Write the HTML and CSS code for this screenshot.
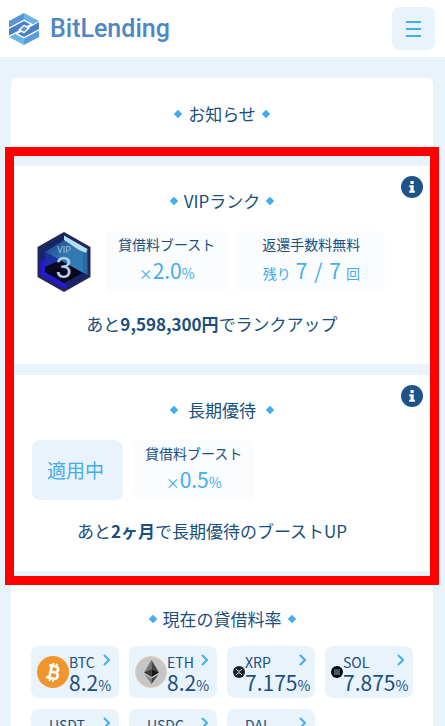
FILE: index.html
```html
<!DOCTYPE html>
<html lang="ja">
<head>
    <meta charset="UTF-8">
    <meta name="viewport" content="width=device-width, initial-scale=1.0">
    <title>BitLending</title>
    <link rel="stylesheet" href="styles.css">
</head>
<body>
    <header class="header">
        <a href="#" class="logo">
            <svg class="logo-mark" viewBox="0 0 30 32" aria-hidden="true">
                <path fill="#5795d6" d="M0 8 15 0V6.500L0 14.500z"/>
                <path fill="#68b4e4" d="M15 0 30 8 24 11.200 15 6.500z"/>
                <path fill="#4a80c6" d="M0 16 15 8 21 11.200 6 19.500 0 22.500z"/>
                <path fill="#4a80c6" d="M30 9V16L15 24 9 20.800 24 12.500z"/>
                <path fill="#5b9bdb" d="M30 17.500V24L15 32V25.500z"/>
                <path fill="#68b4e4" d="M15 32 0 24 6 20.800 15 25.500z"/>
                <path fill="#fff" d="M15 11.500 21 15 15 20.500 9 17z"/>
                <path fill="#5b9bdb" d="M15 13.200 18.500 15.300 15 18.800 11.500 16.700z"/>
            </svg>
            <span class="logo-text">BitLending</span>
        </a>
        <button class="menu-button" type="button" aria-label="メニュー">
            <span></span>
            <span></span>
            <span></span>
        </button>
    </header>

    <main class="main">
        <section class="card news">
            <h2 class="card-title">お知らせ</h2>
        </section>

        <div class="highlight">
            <section class="card status">
                <button class="info-button" type="button" aria-label="VIPランクについて">
                    <svg viewBox="0 0 22 22"><path fill="#fff" d="M9.500 5h3.200v3H9.500zM8.300 9.300h4.400v5.400h1.200v2H8.200v-2h1.300v-3.400H8.300z"/></svg>
                </button>
                <h2 class="card-title">VIPランク</h2>
                <div class="status-body">
                    <div class="status-row">
                        <svg class="rank-badge" viewBox="0 0 64 62" role="img" aria-label="VIP 3">
                            <defs>
                                <linearGradient id="shine" x1="0" y1="0" x2="1" y2="1">
                                    <stop offset="0" stop-color="#1c3f7c"/>
                                    <stop offset="0.5" stop-color="#3476b0"/>
                                    <stop offset="1" stop-color="#2f7fb8"/>
                                </linearGradient>
                                <linearGradient id="digit" x1="0" y1="0" x2="0" y2="1">
                                    <stop offset="0" stop-color="#a9d8f6"/>
                                    <stop offset="1" stop-color="#c3c9ec"/>
                                </linearGradient>
                            </defs>
                            <path fill="#252557" d="M32 1 58.500 16V46L32 61 5.500 46V16z"/>
                            <path fill="#14266a" d="M32 4.500 55.500 18V44L32 57.500 8.500 44V18z"/>
                            <path fill="#2419d2" d="M8.500 30 13 27V41L32 52 36 55 32 57.500 8.500 44z"/>
                            <path fill="#2b6ba5" d="M50 22 55.500 18V44L50 41z"/>
                            <path fill="url(#shine)" d="M32 9 51 20V42L13 21z"/>
                            <path fill="#1c2fa0" d="M13 21 32 31 13 41z"/>
                            <path fill="#060820" d="M13 36 28 29 51 42 32 52 13 41z"/>
                            <path fill="#b3dff3" d="M32 4.500 55.500 18 54 22 47 19 32 9z"/>
                            <text class="rank-label" x="32" y="22">VIP</text>
                            <text class="rank-number" x="32" y="47" fill="url(#digit)">3</text>
                        </svg>
                        <div class="stat">
                            <p class="stat-label">貸借料ブースト</p>
                            <p class="stat-value">×<strong>2.0</strong>%</p>
                        </div>
                        <div class="stat stat-wide">
                            <p class="stat-label">返還手数料無料</p>
                            <p class="stat-value">残り <strong class="stat-count">7 <span>/</span> 7</strong> 回</p>
                        </div>
                    </div>
                    <p class="status-note">あと<b>9,598,300円</b>でランクアップ</p>
                </div>
            </section>

            <section class="card status">
                <button class="info-button" type="button" aria-label="長期優待について">
                    <svg viewBox="0 0 22 22"><path fill="#fff" d="M9.500 5h3.200v3H9.500zM8.300 9.300h4.400v5.400h1.200v2H8.200v-2h1.300v-3.400H8.300z"/></svg>
                </button>
                <h2 class="card-title title-spaced">長期優待</h2>
                <div class="status-body">
                    <div class="status-row">
                        <div class="applied">適用中</div>
                        <div class="stat">
                            <p class="stat-label">貸借料ブースト</p>
                            <p class="stat-value">×<strong>0.5</strong>%</p>
                        </div>
                    </div>
                    <p class="status-note">あと<b>2ヶ月</b>で長期優待のブーストUP</p>
                </div>
            </section>
        </div>

        <section class="card rates">
            <h2 class="card-title">現在の貸借料率</h2>
            <div class="coin-grid">
                <a href="#" class="coin">
                    <svg class="coin-icon" viewBox="0 0 32 32" aria-hidden="true">
                        <circle cx="16" cy="16" r="16" fill="#f0962c"/>
                        <g transform="rotate(13 16 16)" fill="none" stroke="#fff" stroke-width="2.600">
                            <path d="M10.500 10H17.500a3 3 0 0 1 0 6H13.500M17.500 16h.8a3.200 3.200 0 0 1 0 6.400H10.500M13.500 10V22.400"/>
                            <path stroke-width="2" d="M14.500 7v3M18 7v3M14.500 22v3.500M18 22v3.500"/>
                        </g>
                    </svg>
                    <div class="coin-body">
                        <div class="coin-name">BTC<svg class="chevron" viewBox="0 0 7 12"><path d="M1 1l5 5-5 5"/></svg></div>
                        <div class="coin-rate"><strong>8.2</strong>%</div>
                    </div>
                </a>
                <a href="#" class="coin">
                    <svg class="coin-icon" viewBox="0 0 32 32" aria-hidden="true">
                        <circle cx="16" cy="16" r="15.500" fill="#c6c5c6" stroke="#e3cdb8"/>
                        <path fill="#777" d="M16.500 4 9 16.500 16.500 13z"/>
                        <path fill="#444" d="M16.500 4 24 16.500 16.500 13z"/>
                        <path fill="#3a3a3a" d="M9 16.500 16.500 13V21z"/>
                        <path fill="#151515" d="M24 16.500 16.500 13V21z"/>
                        <path fill="#858585" d="M9.500 18.500 16.500 22.500V28z"/>
                        <path fill="#444" d="M23.500 18.500 16.500 22.500V28z"/>
                    </svg>
                    <div class="coin-body">
                        <div class="coin-name">ETH<svg class="chevron" viewBox="0 0 7 12"><path d="M1 1l5 5-5 5"/></svg></div>
                        <div class="coin-rate"><strong>8.2</strong>%</div>
                    </div>
                </a>
                <a href="#" class="coin">
                    <svg class="coin-icon coin-icon-small" viewBox="0 0 12 12" aria-hidden="true">
                        <circle cx="6" cy="6" r="6" fill="#1d2128"/>
                        <path fill="none" stroke="#e4e7ea" d="M3 3l1.800 1.800q1.200 1 2.400 0L9 3M3 9l1.800-1.800q1.200-1 2.400 0L9 9"/>
                    </svg>
                    <div class="coin-body">
                        <div class="coin-name">XRP<svg class="chevron" viewBox="0 0 7 12"><path d="M1 1l5 5-5 5"/></svg></div>
                        <div class="coin-rate"><strong>7.175</strong>%</div>
                    </div>
                </a>
                <a href="#" class="coin">
                    <svg class="coin-icon coin-icon-small" viewBox="0 0 12 12" aria-hidden="true">
                        <circle cx="6" cy="6" r="6" fill="#05070c"/>
                        <path stroke="#7fa9c4" d="M3 4h6M3 6h6M3 8h6"/>
                    </svg>
                    <div class="coin-body">
                        <div class="coin-name">SOL<svg class="chevron" viewBox="0 0 7 12"><path d="M1 1l5 5-5 5"/></svg></div>
                        <div class="coin-rate"><strong>7.875</strong>%</div>
                    </div>
                </a>
                <a href="#" class="coin">
                    <svg class="coin-icon coin-icon-small" viewBox="0 0 12 12" aria-hidden="true"><circle cx="6" cy="6" r="6" fill="#26a17b"/></svg>
                    <div class="coin-body">
                        <div class="coin-name">USDT<svg class="chevron" viewBox="0 0 7 12"><path d="M1 1l5 5-5 5"/></svg></div>
                    </div>
                </a>
                <a href="#" class="coin">
                    <svg class="coin-icon coin-icon-small" viewBox="0 0 12 12" aria-hidden="true"><circle cx="6" cy="6" r="6" fill="#2775ca"/></svg>
                    <div class="coin-body">
                        <div class="coin-name">USDC<svg class="chevron" viewBox="0 0 7 12"><path d="M1 1l5 5-5 5"/></svg></div>
                    </div>
                </a>
                <a href="#" class="coin">
                    <svg class="coin-icon coin-icon-small" viewBox="0 0 12 12" aria-hidden="true"><circle cx="6" cy="6" r="6" fill="#f5ac37"/></svg>
                    <div class="coin-body">
                        <div class="coin-name">DAI<svg class="chevron" viewBox="0 0 7 12"><path d="M1 1l5 5-5 5"/></svg></div>
                    </div>
                </a>
            </div>
        </section>
    </main>
</body>
</html>
```

FILE: styles.css
```css
:root {
    --text-color: #1b4f7e;
    --accent-color: #45acee;
    --background-color: #e9f3fc;
    --stat-color: #fbfcfd;
    --highlight-color: #ff0000;
}

* {
    box-sizing: border-box;
}

body {
    margin: 0;
    background-color: var(--background-color);
    color: var(--text-color);
    font-family: "Noto Sans CJK JP", sans-serif;
    font-size: 17px;
}

p,
h2 {
    margin: 0;
}

a {
    color: inherit;
    text-decoration: none;
}

button {
    padding: 0;
    border: none;
    cursor: pointer;
}

svg {
    display: block;
}

.header {
    display: flex;
    justify-content: space-between;
    align-items: center;
    height: 57px;
    padding: 0 10px 0 9px;
    background-color: #ffffff;
}

.logo {
    display: flex;
    align-items: center;
    gap: 11px;
}

.logo-mark {
    width: 30px;
    height: 32px;
}

.logo-text {
    color: #4f86c6;
    font-family: Roboto, sans-serif;
    font-size: 25px;
    font-weight: 500;
    line-height: 32px;
}

.menu-button {
    display: flex;
    flex-direction: column;
    justify-content: center;
    align-items: center;
    gap: 5px;
    width: 43px;
    height: 43px;
    border-radius: 8px;
    background-color: var(--background-color);
}

.menu-button span {
    width: 15px;
    height: 2px;
    background-color: var(--accent-color);
}

.main {
    padding: 21px 12px 0 11px;
}

.card {
    position: relative;
    background-color: #ffffff;
}

.card-title {
    display: flex;
    justify-content: center;
    align-items: center;
    gap: 7px;
    font-size: 17px;
    font-weight: 400;
    line-height: 25px;
}

.card-title::before,
.card-title::after {
    content: "";
    width: 6px;
    height: 6px;
    background-color: var(--accent-color);
    transform: rotate(45deg);
}

.title-spaced {
    gap: 11px;
}

.news {
    padding: 23px 0 21px;
    border-radius: 6px 6px 0 0;
}

/* 赤枠 */
.highlight {
    display: flex;
    flex-direction: column;
    gap: 11px;
    margin: 0 -6px;
    padding: 10px 0 5px;
    border: 9px solid var(--highlight-color);
}

.status {
    padding: 22px 0 27px;
}

.status-body {
    padding: 18px 38px 0 18px;
}

.status-row {
    display: flex;
    gap: 10px;
    min-height: 60px;
}

.status-note {
    margin-top: 18px;
    line-height: 26px;
    text-align: center;
}

.info-button {
    position: absolute;
    top: 10px;
    right: 7px;
    width: 22px;
    height: 22px;
    border-radius: 50%;
    background-color: #1d5487;
}

.rank-badge {
    width: 64px;
    height: 62px;
}

.rank-label {
    fill: #8fc3e6;
    font-family: Roboto, sans-serif;
    font-size: 9px;
    text-anchor: middle;
}

.rank-number {
    font-family: Roboto, sans-serif;
    font-size: 30px;
    text-anchor: middle;
}

.stat {
    padding: 3px 12px 5px;
    border-radius: 6px;
    background-color: var(--stat-color);
    text-align: center;
    white-space: nowrap;
}

.stat-wide {
    padding: 3px 25px 5px;
}

.stat-label {
    font-size: 14px;
    line-height: 20px;
}

.stat-value {
    margin-top: 3px;
    color: var(--accent-color);
    font-size: 14px;
    line-height: 26px;
}

.stat-value strong,
.coin-rate strong {
    font-size: 21px;
    font-weight: 400;
}

.stat-value .stat-count {
    margin: 0 2px;
}

.stat-count span {
    margin: 0 2px;
}

.applied {
    display: flex;
    justify-content: center;
    align-items: center;
    width: 91px;
    padding: 0 4px 2px 0;
    border-radius: 8px;
    background-color: var(--background-color);
    color: var(--accent-color);
    font-size: 19px;
}

.rates {
    padding: 21px 20px 24px;
}

.coin-grid {
    display: grid;
    grid-template-columns: repeat(4, 1fr);
    gap: 11px 10px;
    margin-top: 15px;
}

.coin {
    display: flex;
    align-items: center;
    height: 52px;
    padding-left: 6px;
    border-radius: 8px;
    background-color: var(--background-color);
}

.coin-icon {
    flex: none;
    width: 32px;
    height: 32px;
}

.coin-icon-small {
    width: 12px;
    height: 12px;
}

.coin-body {
    flex: 1;
    height: 40px;
}

.coin-name {
    display: flex;
    justify-content: space-between;
    align-items: flex-start;
    padding-right: 9px;
    font-size: 14px;
    line-height: 20px;
}

.chevron {
    width: 7px;
    height: 12px;
    margin-top: 2px;
    fill: none;
    stroke: var(--accent-color);
    stroke-width: 2;
}

.coin-rate {
    font-size: 14px;
    line-height: 20px;
}
```
